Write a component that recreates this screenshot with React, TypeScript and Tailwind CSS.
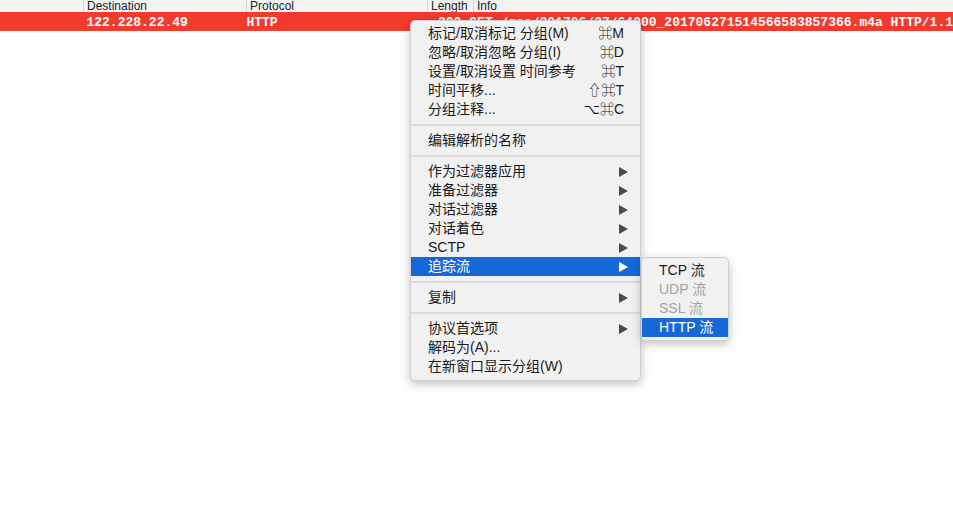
import React from "react"

type Item =
  | { kind: "sep" }
  | { kind: "item"; label: string; shortcut?: string; sub?: boolean; active?: boolean; disabled?: boolean }

const menuItems: Item[] = [
  { kind: "item", label: "标记/取消标记 分组(M)", shortcut: "⌘M" },
  { kind: "item", label: "忽略/取消忽略 分组(I)", shortcut: "⌘D" },
  { kind: "item", label: "设置/取消设置 时间参考", shortcut: "⌘T" },
  { kind: "item", label: "时间平移...", shortcut: "⇧⌘T" },
  { kind: "item", label: "分组注释...", shortcut: "⌥⌘C" },
  { kind: "sep" },
  { kind: "item", label: "编辑解析的名称" },
  { kind: "sep" },
  { kind: "item", label: "作为过滤器应用", sub: true },
  { kind: "item", label: "准备过滤器", sub: true },
  { kind: "item", label: "对话过滤器", sub: true },
  { kind: "item", label: "对话着色", sub: true },
  { kind: "item", label: "SCTP", sub: true },
  { kind: "item", label: "追踪流", sub: true, active: true },
  { kind: "sep" },
  { kind: "item", label: "复制", sub: true },
  { kind: "sep" },
  { kind: "item", label: "协议首选项", sub: true },
  { kind: "item", label: "解码为(A)..." },
  { kind: "item", label: "在新窗口显示分组(W)" },
]

const subItems = [
  { label: "TCP 流" },
  { label: "UDP 流", disabled: true },
  { label: "SSL 流", disabled: true },
  { label: "HTTP 流", active: true },
]

const font = { fontFamily: '"Liberation Sans", "Noto Sans CJK SC", "DejaVu Sans", sans-serif' }

function Arrow({ white }: { white?: boolean }) {
  return (
    <svg width="9" height="10" viewBox="0 0 9 10" className="shrink-0">
      <path d="M0 0 L9 5 L0 10 Z" fill={white ? "#ffffff" : "#4a4a4a"} />
    </svg>
  )
}

export default function App() {
  return (
    <div className="relative w-[953px] h-[521px] bg-white overflow-hidden" style={font}>
      {/* column header */}
      <div className="flex h-[12px] bg-[#f3f3f3] text-[12px] leading-[12px] text-[#222] overflow-hidden">
        <div className="w-[84px] border-r border-[#d6d6d6]" />
        <div className="w-[163px] pl-[3px] border-r border-[#d6d6d6]">Destination</div>
        <div className="w-[181px] pl-[3px] border-r border-[#d6d6d6]">Protocol</div>
        <div className="w-[46px] pl-[3px] border-r border-[#d6d6d6]">Length</div>
        <div className="flex-1 pl-[3px]">Info</div>
      </div>

      {/* selected packet row */}
      <div
        className="flex h-[19px] pt-[2px] items-center bg-[#f23a2e] text-white font-bold text-[13px] whitespace-nowrap overflow-hidden"
        style={{ fontFamily: '"Liberation Mono", monospace' }}
      >
        <div className="w-[84px]" />
        <div className="w-[163px] pl-[4px]">122.228.22.49</div>
        <div className="w-[181px] pl-[4px]">HTTP</div>
        <div className="w-[46px] pr-[4px] text-right">200</div>
        <div className="flex-1 pl-[4px]">GET /gsa/201706/27/64000_201706271514566583857366.m4a HTTP/1.1</div>
      </div>

      {/* context menu */}
      <div className="absolute left-[410px] top-[20px] w-[231px] pt-[3px] pb-[4px] bg-[#f1f1f1] border border-[#cfcfcf] rounded-[5px] shadow-[0_3px_10px_rgba(0,0,0,0.25)] text-[14px] text-[#1a1a1a]">
        {menuItems.map((it, i) =>
          it.kind === "sep" ? (
            <div key={i} className="h-[12px] flex items-center">
              <div className="w-full h-[2px] bg-[#dcdcdc]" />
            </div>
          ) : (
            <div
              key={i}
              className={`h-[19px] flex items-center pl-[17px] pr-[12px] leading-[19px] ${
                it.active ? "bg-[#1668d9] text-white" : ""
              }`}
            >
              <span className="flex-1 whitespace-nowrap">{it.label}</span>
              {it.shortcut && <span className="pr-[4px] whitespace-nowrap">{it.shortcut}</span>}
              {it.sub && <Arrow white={it.active} />}
            </div>
          )
        )}
      </div>

      {/* submenu */}
      <div className="absolute left-[641px] top-[257px] w-[88px] py-[3px] bg-[#f1f1f1] border border-[#cfcfcf] rounded-[5px] shadow-[0_3px_10px_rgba(0,0,0,0.25)] text-[14px]">
        {subItems.map((s) => (
          <div
            key={s.label}
            className={`h-[19px] flex items-center pl-[17px] leading-[19px] whitespace-nowrap ${
              s.active ? "bg-[#1668d9] text-white" : s.disabled ? "text-[#a3a3a3]" : "text-[#1a1a1a]"
            }`}
          >
            {s.label}
          </div>
        ))}
      </div>
    </div>
  )
}
